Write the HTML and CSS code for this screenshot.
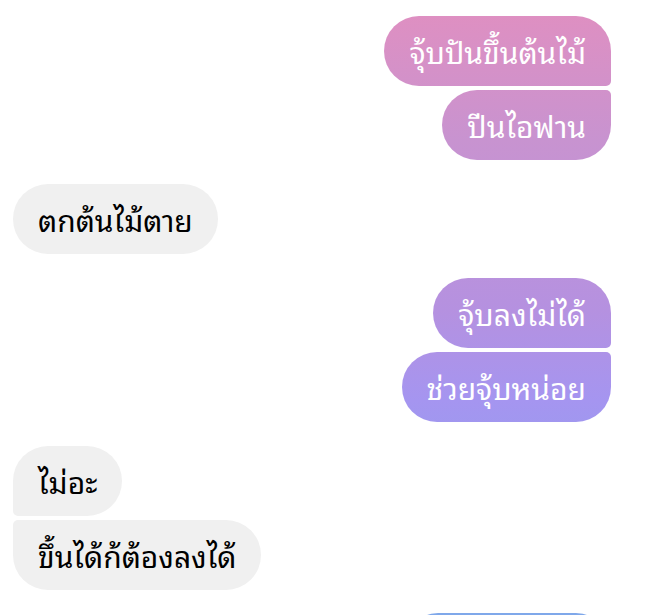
FILE: index.html
```html
<!DOCTYPE html>
<html lang="th">
<head>
    <meta charset="UTF-8">
    <meta name="viewport" content="width=device-width, initial-scale=1.0">
    <title>Chat</title>
    <link rel="stylesheet" href="styles.css">
</head>
<body>
    <div class="chat">
        <div class="group out">
            <div class="msg first">จุ้บปันขึ้นต้นไม้</div>
            <div class="msg last">ปีนไอฟาน</div>
        </div>

        <div class="group in">
            <div class="msg">ตกต้นไม้ตาย</div>
        </div>

        <div class="group out">
            <div class="msg first">จุ้บลงไม่ได้</div>
            <div class="msg last">ช่วยจุ้บหน่อย</div>
        </div>

        <div class="group in">
            <div class="msg first">ไม่อะ</div>
            <div class="msg last">ขึ้นได้ก้ต้องลงได้</div>
        </div>

        <div class="group out next-group">
            <div class="msg next"></div>
        </div>
    </div>
</body>
</html>
```

FILE: styles.css
```css
body {
    margin: 0;
    padding: 0;
    background-color: #fff;
    font-family: "Noto Sans Thai Looped", "Noto Sans", sans-serif;
    overflow: hidden;
}

.chat {
    display: flex;
    flex-direction: column;
    gap: 24px;
    padding: 16px 47px 0 13px;
}

.group {
    display: flex;
    flex-direction: column;
    gap: 4px;
}

.group.out {
    align-items: flex-end;
}

.group.in {
    align-items: flex-start;
}

.msg {
    font-size: 30px;
    line-height: 40px;
    padding: 15px 25px;
    border-radius: 35px;
    white-space: nowrap;
}

.in .msg {
    background-color: #f0f0f0;
    color: #000;
}

.in .msg.first {
    border-bottom-left-radius: 5px;
}

.in .msg.last {
    border-top-left-radius: 5px;
}

.out .msg {
    color: #fff;
    background: linear-gradient(to bottom, #e18fc0 0, #c893d0 140px, #b591e0 310px, #a595f0 400px, #7fa8ea 615px);
    background-attachment: fixed;
}

.out .msg.first {
    border-bottom-right-radius: 5px;
}

.out .msg.last {
    border-top-right-radius: 5px;
}

.next-group {
    margin-top: -1px;
}

.out .msg.next {
    width: 158px;
    height: 40px;
}
```
